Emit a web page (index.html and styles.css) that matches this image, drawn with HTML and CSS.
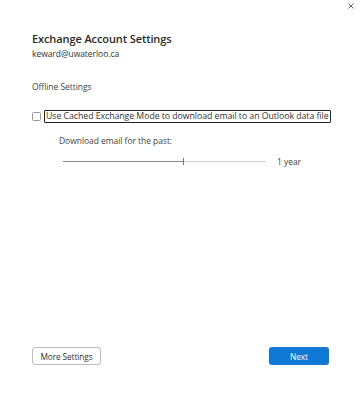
FILE: index.html
```html
<!DOCTYPE html>
<html>
<head>
<meta charset="utf-8">
<link rel="stylesheet" href="styles.css">
</head>
<body>
<div class="dialog">
  <div class="topbar">
    <svg class="close" width="6" height="6" viewBox="0 0 6 6"><path d="M0.5 0.5L5.5 5.5M5.5 0.5L0.5 5.5" stroke="#555" stroke-width="0.9"/></svg>
  </div>
  <div class="content">
    <div class="title">Exchange Account Settings</div>
    <div class="email">keward@uwaterloo.ca</div>
    <div class="section">Offline Settings</div>
    <div class="check-row">
      <span class="checkbox"></span>
      <span class="check-label">Use Cached Exchange Mode to download email to an Outlook data file</span>
    </div>
    <div class="sub">
      <div class="sub-label">Download email for the past:</div>
      <div class="slider-row">
        <div class="slider">
          <div class="fill"></div>
          <div class="thumb"></div>
        </div>
        <span class="value">1 year</span>
      </div>
    </div>
  </div>
  <div class="footer">
    <button class="btn secondary">More Settings</button>
    <button class="btn primary">Next</button>
  </div>
</div>
</body>
</html>
```
FILE: styles.css
```css
html, body {
  margin: 0;
  padding: 0;
  background: #fff;
}
body {
  font-family: "Open Sans", "Noto Sans", sans-serif;
  color: #333;
}
.dialog {
  width: 362px;
  height: 396px;
  display: flex;
  flex-direction: column;
  box-sizing: border-box;
}
.topbar {
  display: flex;
  justify-content: flex-end;
  padding: 3px 8px 0 0;
  height: 9px;
}
.close {
  display: block;
}
.content {
  padding: 20px 0 0 32px;
  flex: 1;
}
.title {
  font-size: 11px;
  font-weight: 600;
  line-height: 14px;
  color: #2a2a2a;
  letter-spacing: -0.1px;
}
.email {
  font-size: 8.5px;
  line-height: 10px;
  margin-top: 3px;
  color: #333;
  letter-spacing: -0.05px;
}
.section {
  font-size: 8.5px;
  line-height: 10px;
  margin-top: 23px;
  color: #444;
  letter-spacing: -0.05px;
}
.check-row {
  display: flex;
  align-items: center;
  margin-top: 18px;
}
.checkbox {
  width: 7px;
  height: 7px;
  border: 1px solid #9a9a9a;
  border-radius: 1.5px;
  background: #fff;
  flex: none;
}
.check-label {
  margin-left: 3px;
  font-size: 8.75px;
  line-height: 11px;
  padding: 0 1px 0 1px;
  border: 1.5px solid #222;
  border-radius: 1px;
  color: #333;
  letter-spacing: -0.05px;
  white-space: nowrap;
}
.sub {
  padding-left: 27px;
}
.sub-label {
  font-size: 8.5px;
  line-height: 10px;
  margin-top: 13px;
  color: #444;
  letter-spacing: -0.05px;
}
.slider-row {
  display: flex;
  align-items: center;
  margin-top: 10px;
  padding-left: 4px;
}
.slider {
  position: relative;
  width: 203px;
  height: 1px;
  background: #d0d0d0;
  flex: none;
}
.fill {
  width: 121px;
  height: 1px;
  background: #8a8a8a;
}
.thumb {
  position: absolute;
  left: 120px;
  top: -3px;
  width: 1px;
  height: 7px;
  background: #777;
}
.value {
  margin-left: 11px;
  font-size: 8.5px;
  color: #444;
  letter-spacing: -0.05px;
}
.footer {
  display: flex;
  justify-content: space-between;
  padding: 0 33px 31px 32px;
}
.btn {
  font-family: "Open Sans", "Noto Sans", sans-serif;
  font-size: 8.3px;
  height: 18px;
  border-radius: 3px;
  padding: 0;
  margin: 0;
  letter-spacing: -0.1px;
}
.secondary {
  width: 69px;
  background: #fff;
  border: 1px solid #bdbdbd;
  color: #333;
}
.primary {
  width: 60px;
  background: #0f78d6;
  border: none;
  color: #fff;
}
```
